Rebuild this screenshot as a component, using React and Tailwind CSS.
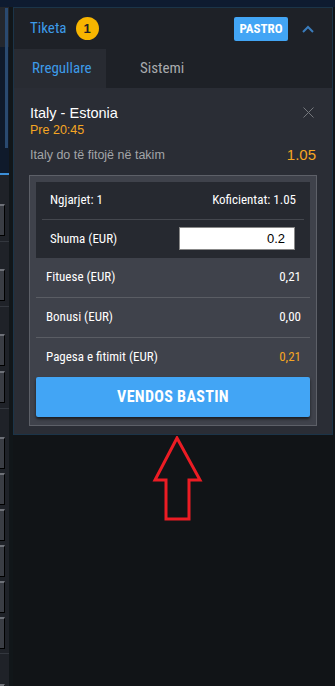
import React from "react";

const narrow = { fontFamily: '"Liberation Sans Narrow", "Roboto Condensed", "Liberation Sans", Arial, sans-serif' };
const arial = { fontFamily: '"Liberation Sans", Arial, sans-serif' };

function LBox({ mt = 0 }) {
  return (
    <div
      className="h-[32px] w-[5px] shrink-0 bg-[#3a3d44] border-t-2 border-t-[#6e7178] border-r border-r-black border-b border-b-black"
      style={{ marginTop: mt }}
    />
  );
}
function LDiv({ mt = 0 }) {
  return <div className="h-px w-full bg-[#33373e] shrink-0" style={{ marginTop: mt }} />;
}

function LeftColumn() {
  return (
    <div className="relative w-[9px] shrink-0 flex flex-col bg-[#1f2228]">
      <div className="h-[40px] bg-[#23272e] shrink-0" />
      <div className="h-[126px] bg-[#0f1a2b] shrink-0" />
      <div className="h-[2px] bg-[#3b8fd8] shrink-0" />
      <LBox mt={29} />
      <LDiv mt={5} />
      <LBox mt={27} />
      <LDiv mt={5} />
      <LBox mt={27} />
      <LBox mt={5} />
      <LDiv mt={5} />
      <LBox mt={28} />
      <LBox mt={4} />
      <LBox mt={4} />
      <LBox mt={4} />
      <LBox mt={4} />
      <LBox mt={4} />
      <LDiv mt={4} />
      <LBox mt={30} />
      <div className="absolute left-[5px] top-[1px] w-[3px] h-[140px] bg-[#2a4a70]" />
    </div>
  );
}

function Row({ label, value, valueClass = "text-white" }) {
  return (
    <div className="flex items-center justify-between h-[39px] pl-[10px] pr-[9px]" style={narrow}>
      <span className="text-[13px] text-white">{label}</span>
      <span className={"text-[13px] " + valueClass}>{value}</span>
    </div>
  );
}

export default function App() {
  return (
    <div className="w-[335px] h-[686px] bg-[#111417] flex flex-col overflow-hidden">
      <div className="h-[7px] bg-[#0e1b30] shrink-0" />
      <div className="flex flex-1 min-h-0">
        <LeftColumn />
        <div className="w-[4px] bg-[#111619] shrink-0" />
        <div className="w-[320px] shrink-0 flex flex-col">
          <div className="h-[428px] border border-[#1b3448] bg-[#2a2d35] flex flex-col">
            {/* header */}
            <div className="h-[41px] bg-[#1e2127] flex items-center pl-[16px] pr-[18px]">
              <span className="text-[15px] text-[#3d9be9]" style={narrow}>Tiketa</span>
              <span
                className="ml-[9px] w-[23px] h-[23px] rounded-full bg-[#f7b500] flex items-center justify-center text-[13px] font-bold text-[#222]"
                style={arial}
              >
                1
              </span>
              <div className="flex-1" />
              <span
                className="h-[24px] w-[54px] rounded-[2px] bg-[#42a5f5] text-white text-[13px] font-bold flex items-center justify-center"
                style={narrow}
              >
                PASTRO
              </span>
              <svg className="ml-[14px]" width="12" height="8" viewBox="0 0 12 8">
                <path d="M1 7 L6 2 L11 7" fill="none" stroke="#3a7cbc" strokeWidth="2" />
              </svg>
            </div>
            {/* tabs */}
            <div className="h-[39px] flex bg-[#1e2127]">
              <div className="w-[92px] bg-[#282b32] flex items-center pl-[18px]">
                <span className="text-[15px] text-[#3d9be9]" style={narrow}>Rregullare</span>
              </div>
              <div className="flex items-center pl-[34px]">
                <span className="text-[15px] text-[#a9abae]" style={narrow}>Sistemi</span>
              </div>
            </div>
            {/* event */}
            <div className="pl-[16px] pr-[16px] pt-[16px] relative">
              <div className="text-[14.5px] leading-[18px] text-white" style={arial}>Italy - Estonia</div>
              <div className="text-[12.5px] leading-[16px] text-[#f5a623]" style={arial}>Pre 20:45</div>
              <svg className="absolute right-[18px] top-[19px]" width="11" height="11" viewBox="0 0 11 11">
                <path d="M0.5 0.5 L10.5 10.5 M10.5 0.5 L0.5 10.5" stroke="#75787d" strokeWidth="1" />
              </svg>
              <div className="flex items-center justify-between mt-[6px]">
                <span className="text-[12.5px] text-[#a3a5a8]" style={arial}>Italy do të fitojë në takim</span>
                <span className="text-[15px] text-[#f5a623]" style={arial}>1.05</span>
              </div>
            </div>
            {/* box */}
            <div className="ml-[15px] mr-[15px] mt-[8px] border border-[#5d6068] bg-[#3f424b] px-[6px] pt-[6px] pb-[8px]">
              <div className="bg-[#262930]">
                <div className="h-[37px] flex items-center justify-between px-[14px]" style={narrow}>
                  <span className="text-[13px] text-white">Ngjarjet: 1</span>
                  <span className="text-[13px] text-white">Koficientat: 1.05</span>
                </div>
                <div className="mx-[6px] h-px bg-[#44474e]" />
                <div className="h-[38px] flex items-center justify-between pl-[14px] pr-[15px]">
                  <span className="text-[13px] text-white" style={narrow}>Shuma (EUR)</span>
                  <div
                    className="w-[116px] h-[23px] bg-white border border-[#888] flex items-center justify-end pr-[9px] text-[13px] text-black"
                    style={arial}
                  >
                    0.2
                  </div>
                </div>
              </div>
              <Row label="Fituese (EUR)" value="0,21" />
              <div className="h-px bg-[#5a5d64]" />
              <Row label="Bonusi (EUR)" value="0,00" />
              <div className="h-px bg-[#5a5d64]" />
              <Row label="Pagesa e fitimit (EUR)" value="0,21" valueClass="text-[#f5a623]" />
              <div
                className="h-[40px] bg-[#42a5f5] rounded-[2px] flex items-center justify-center text-white text-[16px] font-bold shadow-[0_2px_3px_rgba(0,0,0,0.6)]"
                style={narrow}
              >
                <span className="tracking-[0.3px]">VENDOS BASTIN</span>
              </div>
            </div>
          </div>
          {/* arrow */}
          <div className="pl-[139px] pt-[1px]">
            <svg width="52" height="86" viewBox="0 0 52 86">
              <path
                d="M25 2 L3 44 L14 44 L14 83 L37 83 L37 44 L48 44 Z"
                fill="none"
                stroke="#ec1c24"
                strokeWidth="3"
                strokeLinejoin="miter"
              />
            </svg>
          </div>
        </div>
        <div className="flex-1 bg-[#111417]" />
      </div>
    </div>
  );
}
